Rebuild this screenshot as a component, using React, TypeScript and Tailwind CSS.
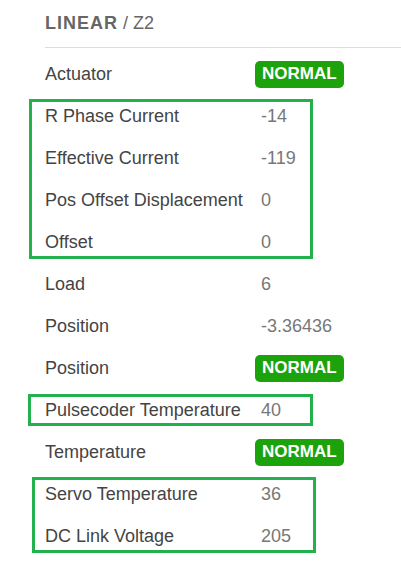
const rows: { label: string; value: string; badge?: boolean }[] = [
  { label: "Actuator", value: "NORMAL", badge: true },
  { label: "R Phase Current", value: "-14" },
  { label: "Effective Current", value: "-119" },
  { label: "Pos Offset Displacement", value: "0" },
  { label: "Offset", value: "0" },
  { label: "Load", value: "6" },
  { label: "Position", value: "-3.36436" },
  { label: "Position", value: "NORMAL", badge: true },
  { label: "Pulsecoder Temperature", value: "40" },
  { label: "Temperature", value: "NORMAL", badge: true },
  { label: "Servo Temperature", value: "36" },
  { label: "DC Link Voltage", value: "205" },
];

// annotation frames drawn over the table
const marks = [
  "left-[29px] top-[99px] w-[284px] h-[160px]",
  "left-[28px] top-[394px] w-[285px] h-[32px]",
  "left-[32px] top-[477px] w-[284px] h-[76px]",
];

export default function App() {
  return (
    <div
      className="relative w-[401px] h-[574px] bg-white overflow-hidden pl-[45px]"
      style={{ fontFamily: '"Liberation Sans", Arial, sans-serif' }}
    >
      <div className="h-[48px] flex items-center border-b border-[#dddddd] text-[18px] text-[#666666]">
        <span className="font-bold tracking-[1px]">LINEAR</span>
        <span className="ml-[5px]">/ Z2</span>
      </div>

      <div className="pt-[5px]">
        {rows.map((row, i) => (
          <div key={i} className="h-[42px] flex items-center text-[18px]">
            <span className="w-[216px] shrink-0 text-[#444444] whitespace-nowrap">{row.label}</span>
            {row.badge ? (
              <span className="-ml-[6px] h-[27px] px-[7px] flex items-center rounded-[5px] bg-[#1ca20a] text-white font-bold text-[17px]">
                {row.value}
              </span>
            ) : (
              <span className="text-[#777777]">{row.value}</span>
            )}
          </div>
        ))}
      </div>

      {marks.map((m, i) => (
        <div key={i} className={`absolute border-[3px] border-[#22b14c] pointer-events-none ${m}`} />
      ))}
    </div>
  );
}
